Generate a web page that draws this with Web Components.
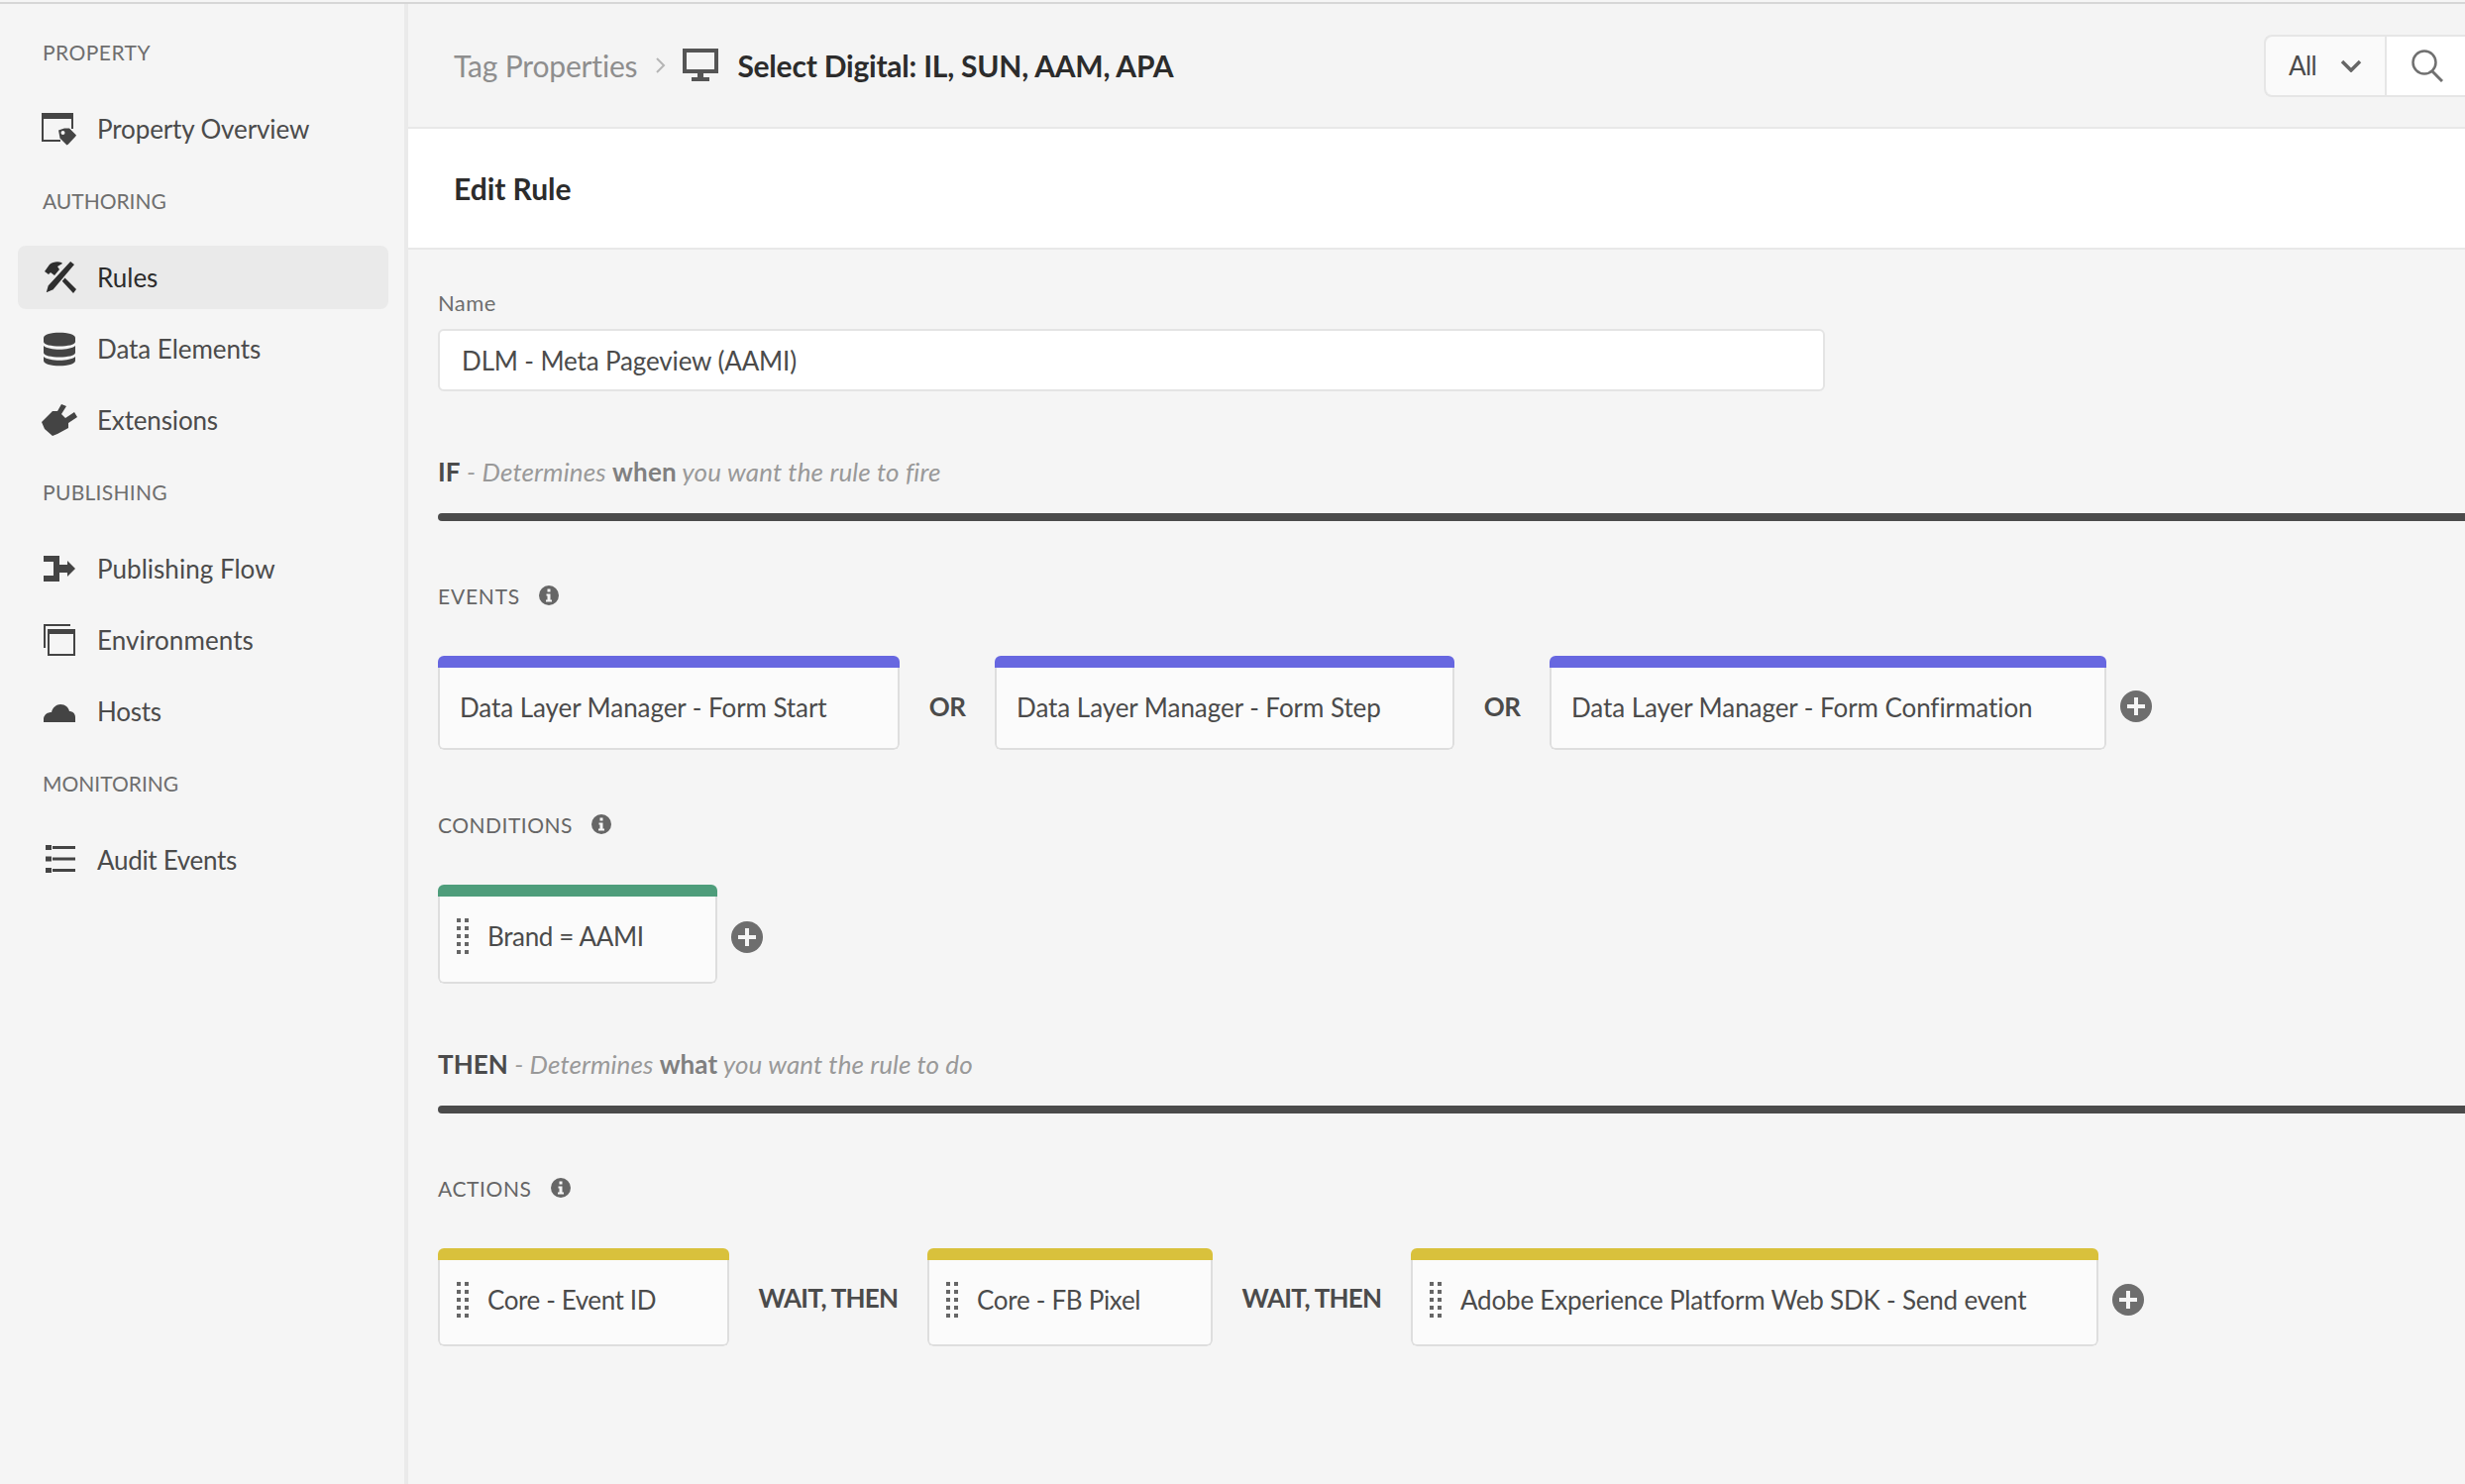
<!DOCTYPE html>
<html>
<head>
<meta charset="utf-8">
<title>Edit Rule</title>
<style>
html, body { margin: 0; height: 100%; background: #f5f5f5; overflow: hidden; }
body { font-family: Lato, "Open Sans", sans-serif; color: #4b4b4b; }
</style>
</head>
<body>
<app-shell>
  <side-nav slot="nav">
    <nav-group label="PROPERTY" ls="0.45">
      <nav-item ls="-0.12"><svg slot="icon" width="36" height="36" viewBox="0 0 36 36"><path fill="#444" d="M0 2h32v6H0z"/><path fill="none" stroke="#444" stroke-width="2" d="M1 7v23h18M31 7v11"/><path fill="#444" d="M17 19.500 23 17.500h5l7 7-1 1.500-7 7.500-1.500 1-7-7z"/><circle cx="21.500" cy="22" r="2" fill="#f5f5f5"/></svg>Property Overview</nav-item>
    </nav-group>
    <nav-group label="AUTHORING" ls="-0.03">
      <nav-item active ls="0"><svg slot="icon" width="36" height="36" viewBox="0 0 36 36"><path fill="#2f2f2f" d="M3 12 8 5c3-2.500 8-3.500 12-2l1 1-5 3 2 3-5 6-4-3-2 2z"/><path fill="#2f2f2f" d="m20 21 3-3 12 12-3 4z"/><path fill="#2f2f2f" stroke="#eaeaea" stroke-width="1.500" d="M29 1 34 5 12 31l-7 3-1-1 2-7z"/></svg>Rules</nav-item>
      <nav-item ls="-0.05"><svg slot="icon" width="36" height="36" viewBox="0 0 36 36"><path fill="#444" d="M2 7c0-7 32-7 32 0v4c0 6-32 6-32 0zM2 15c6 5 26 5 32 0v7c0 6-32 6-32 0zM2 26c6 5 26 5 32 0v4c0 7-32 7-32 0z"/></svg>Data Elements</nav-item>
      <nav-item ls="-0.15"><svg slot="icon" width="36" height="36" viewBox="0 0 36 36"><path fill="#444" d="M0 20 11 9h5l4-7 5 2-5 8 4 4 9-6 3 5-9 6v5l-11 6-5 2-8-7z"/></svg>Extensions</nav-item>
    </nav-group>
    <nav-group label="PUBLISHING" ls="0.3">
      <nav-item ls="0.03"><svg slot="icon" width="36" height="36" viewBox="0 0 36 36"><path fill="#444" d="M2 5h16v9h8v-4l8 8-8 8v-4h-8v9H2v-6h10V11H2z"/></svg>Publishing Flow</nav-item>
      <nav-item ls="0.1"><svg slot="icon" width="36" height="36" viewBox="0 0 36 36"><path fill="none" stroke="#444" stroke-width="2" d="M3 26V3h26M7 11v22h26V11"/><path fill="#444" d="M6 7h28v5H6z"/></svg>Environments</nav-item>
      <nav-item ls="-0.25"><svg slot="icon" width="36" height="36" viewBox="0 0 36 36"><path fill="#444" d="M2 29v-4c1-4 4-6 8-6 1-5 5-8 9-8 5 0 8 3 9 7 3 0 6 2 6 6v5z"/></svg>Hosts</nav-item>
    </nav-group>
    <nav-group label="MONITORING" ls="0">
      <nav-item ls="-0.3"><svg slot="icon" width="36" height="36" viewBox="0 0 36 36"><path fill="#444" d="M11 4h23v3H11zM11 15.500h23v3H11zM11 27h23v3H11z"/><path fill="#444" d="M4 3h6v5H4zM4 14.500h6v5H4zM4 26h6v5H4z"/></svg>Audit Events</nav-item>
    </nav-group>
  </side-nav>

  <top-bar slot="top"></top-bar>
  <page-title slot="title">Edit Rule</page-title>

  <rule-form slot="form">
    <text-field label="Name" value="DLM - Meta Pageview (AAMI)"></text-field>

    <rule-heading word="IF" when="when" tail="you want the rule to fire" ls="0.14"></rule-heading>
    <rule-group heading="EVENTS" ls="0.8">
      <rule-card color="#6767e0" width="466" ls="-0.07" lift="2">Data Layer Manager - Form Start</rule-card>
      <rule-link width="96" drop="7">OR</rule-link>
      <rule-card color="#6767e0" width="464" ls="-0.05" lift="2">Data Layer Manager - Form Step</rule-card>
      <rule-link width="96" drop="7">OR</rule-link>
      <rule-card color="#6767e0" width="562" ls="-0.07" lift="2">Data Layer Manager - Form Confirmation</rule-card>
      <add-button drop="7" gap="14"></add-button>
    </rule-group>
    <rule-group heading="CONDITIONS" ls="0.5" height="100">
      <rule-card color="#4e9d7b" width="282" grip="6" ls="-0.35">Brand = AAMI</rule-card>
      <add-button drop="6" gap="14"></add-button>
    </rule-group>

    <rule-heading word="THEN" when="what" tail="you want the rule to do" ls="0.09"></rule-heading>
    <rule-group heading="ACTIONS" ls="0.6" height="99">
      <rule-card color="#d9c13c" width="294" grip="5" ls="-0.4">Core - Event ID</rule-card>
      <rule-link width="200" drop="0">WAIT, THEN</rule-link>
      <rule-card color="#d9c13c" width="288" grip="5" ls="-0.3">Core - FB Pixel</rule-card>
      <rule-link width="200" drop="0">WAIT, THEN</rule-link>
      <rule-card color="#d9c13c" width="694" grip="5" ls="-0.2">Adobe Experience Platform Web SDK - Send event</rule-card>
      <add-button drop="5" gap="14"></add-button>
    </rule-group>
  </rule-form>
</app-shell>

<script>
class AppShell extends HTMLElement {
  constructor() {
    super();
    this.attachShadow({mode: "open"}).innerHTML = `
      <style>
      :host { display: block; height: 1498px; box-sizing: border-box; padding-top: 2px; overflow: hidden; }
      .frame { display: grid; grid-template-columns: 412px 1fr; height: 100%; border-top: 2px solid #d6d6d6; }
      nav { background: #f5f5f5; border-right: 4px solid #eaeaea; box-sizing: border-box; }
      main { min-width: 0; display: flex; flex-direction: column; }
      </style>
      <div class="frame">
        <nav><slot name="nav"></slot></nav>
        <main>
          <slot name="top"></slot>
          <slot name="title"></slot>
          <slot name="form"></slot>
        </main>
      </div>`;
  }
}

class SideNav extends HTMLElement {
  constructor() {
    super();
    this.attachShadow({mode: "open"}).innerHTML = `
      <style>
      :host { display: flex; flex-direction: column; gap: 19px; padding: 31px 16px 0 18px; }
      </style>
      <slot></slot>`;
  }
}

class NavGroup extends HTMLElement {
  constructor() {
    super();
    this.attachShadow({mode: "open"}).innerHTML = `
      <style>
      :host { display: block; }
      .label { height: 36px; line-height: 36px; margin: 0 0 23px 25px; font-size: 21px; color: #6e6e6e; }
      </style>
      <div class="label" style="letter-spacing:${this.getAttribute("ls")}px">${this.getAttribute("label")}</div>
      <slot></slot>`;
  }
}

class NavItem extends HTMLElement {
  constructor() {
    super();
    this.attachShadow({mode: "open"}).innerHTML = `
      <style>
      :host { display: block; height: 72px; padding: 4px 0; box-sizing: border-box; }
      .row { height: 64px; display: flex; align-items: center; gap: 20px; padding-left: 24px; border-radius: 8px; font-size: 26px; color: #4b4b4b; }
      :host([active]) .row { background: #eaeaea; color: #2c2c2c; }
      ::slotted(svg) { flex: none; display: block; }
      </style>
      <div class="row" style="letter-spacing:${this.getAttribute("ls")}px"><slot name="icon"></slot><span><slot></slot></span></div>`;
  }
}

class TopBar extends HTMLElement {
  constructor() {
    super();
    this.attachShadow({mode: "open"}).innerHTML = `
      <style>
      :host { display: flex; align-items: center; height: 126px; box-sizing: border-box; padding-left: 46px; border-bottom: 2px solid #e8e8e8; background: #f4f4f4; font-size: 30px; }
      .crumb { color: #8e8e8e; letter-spacing: -0.18px; }
      .sep { margin: 0 16px 0 18px; display: block; }
      .name { margin-left: 19px; font-weight: 700; color: #2c2c2c; letter-spacing: -0.22px; }
      .search { margin-left: auto; display: flex; height: 63px; box-sizing: border-box; width: 203px; border: 2px solid #e6e6e6; border-right: 0; border-radius: 8px 0 0 8px; }
      .scope { width: 122px; flex: none; display: flex; align-items: center; padding-left: 23px; box-sizing: border-box; gap: 24px; background: #fafafa; border-right: 2px solid #e6e6e6; border-radius: 8px 0 0 8px; font-size: 26px; color: #4b4b4b; letter-spacing: -0.6px; }
      .go { flex: 1; background: #fff; display: flex; align-items: center; padding-left: 25px; }
      svg { display: block; flex: none; }
      </style>
      <span class="crumb">Tag Properties</span>
      <svg class="sep" width="12" height="20" viewBox="0 0 12 20"><path d="M2 3l7 7-7 7" fill="none" stroke="#b5b5b5" stroke-width="2"/></svg>
      <svg width="36" height="34" viewBox="0 0 36 34"><path fill="#555" d="M0 0h36v25H21v4h6v4H9v-4h6v-4H0zm4 4v17h28V4z"/></svg>
      <span class="name">Select Digital: IL, SUN, AAM, APA</span>
      <div class="search">
        <div class="scope">All<svg width="22" height="13" viewBox="0 0 22 13"><path d="M2 2l9 9 9-9" fill="none" stroke="#666" stroke-width="3.500"/></svg></div>
        <div class="go"><svg width="32" height="33" viewBox="0 0 32 33"><circle cx="13" cy="13" r="11.500" fill="none" stroke="#707070" stroke-width="2.500"/><path d="M21 22l10 10" stroke="#707070" stroke-width="3"/></svg></div>
      </div>`;
  }
}

class PageTitle extends HTMLElement {
  constructor() {
    super();
    this.attachShadow({mode: "open"}).innerHTML = `
      <style>
      :host { display: flex; align-items: center; height: 122px; box-sizing: border-box; padding-left: 46px; background: #fff; border-bottom: 2px solid #e8e8e8; font-size: 30px; font-weight: 700; color: #2c2c2c; letter-spacing: -0.05px; }
      </style>
      <slot></slot>`;
  }
}

class RuleForm extends HTMLElement {
  constructor() {
    super();
    this.attachShadow({mode: "open"}).innerHTML = `
      <style>
      :host { display: block; padding-left: 30px; }
      </style>
      <slot></slot>`;
  }
}

class TextField extends HTMLElement {
  constructor() {
    super();
    this.attachShadow({mode: "open"}).innerHTML = `
      <style>
      :host { display: block; padding-top: 39px; }
      label { display: block; height: 30px; line-height: 30px; margin-bottom: 11px; font-size: 22px; color: #6e6e6e; letter-spacing: 0.4px; }
      .box { width: 1400px; height: 63px; box-sizing: border-box; display: flex; align-items: center; padding-left: 22px; background: #fff; border: 2px solid #e4e4e4; border-radius: 6px; font-size: 26px; color: #4b4b4b; letter-spacing: -0.14px; }
      </style>
      <label>${this.getAttribute("label")}</label>
      <div class="box">${this.getAttribute("value")}</div>`;
  }
}

class RuleHeading extends HTMLElement {
  constructor() {
    super();
    this.attachShadow({mode: "open"}).innerHTML = `
      <style>
      :host { display: block; padding-top: 62px; }
      .text { height: 40px; line-height: 38px; font-size: 26px; color: #999; font-style: italic; }
      b { font-style: normal; color: #4b4b4b; }
      b.when { color: #808080; }
      .rule { height: 8px; margin-top: 21px; background: #4b4b4b; border-radius: 4px 0 0 4px; }
      </style>
      <div class="text" style="letter-spacing:${this.getAttribute("ls")}px"><b>${this.getAttribute("word")}</b> - Determines <b class="when">${this.getAttribute("when")}</b> ${this.getAttribute("tail")}</div>
      <div class="rule"></div>`;
  }
}

class RuleGroup extends HTMLElement {
  constructor() {
    super();
    this.attachShadow({mode: "open"}).innerHTML = `
      <style>
      :host { display: block; padding-top: 61px; }
      .head { display: flex; align-items: center; gap: 19px; height: 30px; box-sizing: border-box; padding-bottom: 2px; margin-bottom: 45px; font-size: 21px; color: #666; }
      .row { display: flex; align-items: stretch; height: ${this.getAttribute("height") || 95}px; }
      svg { display: block; }
      </style>
      <div class="head"><span style="letter-spacing:${this.getAttribute("ls")}px">${this.getAttribute("heading")}</span>
        <svg width="20" height="20" viewBox="0 0 20 20"><circle cx="10" cy="10" r="10" fill="#666"/><path fill="#f5f5f5" d="M8.500 3.500h3v3h-3zM7.500 8.500h4v6h1.500v2H7v-2h1.500v-4h-1z"/></svg>
      </div>
      <div class="row"><slot></slot></div>`;
  }
}

class RuleCard extends HTMLElement {
  constructor() {
    super();
    const grip = this.getAttribute("grip");
    const lift = grip || this.getAttribute("lift") || 0;
    const dots = [0, 8, 16, 24, 32].map(y => `<rect x="0" y="${y}" width="4" height="4"/><rect x="8" y="${y}" width="4" height="4"/>`).join("");
    this.attachShadow({mode: "open"}).innerHTML = `
      <style>
      :host { display: flex; flex-direction: column; flex: none; width: ${this.getAttribute("width")}px; box-sizing: border-box; border-radius: 6px; overflow: hidden; background: #fbfbfb; font-size: 26px; color: #4b4b4b; letter-spacing: ${this.getAttribute("ls")}px; }
      .bar { height: 12px; flex: none; background: ${this.getAttribute("color")}; }
      .body { flex: 1; display: flex; align-items: center; box-sizing: border-box; padding: 0 0 ${lift}px ${grip ? 17 : 20}px; gap: 19px; border: 2px solid #dedede; border-top: 0; border-radius: 0 0 6px 6px; }
      svg { display: block; flex: none; }
      </style>
      <div class="bar"></div>
      <div class="body">${grip ? `<svg width="12" height="36" viewBox="0 0 12 36" fill="#666">${dots}</svg>` : ""}<span><slot></slot></span></div>`;
  }
}

class RuleLink extends HTMLElement {
  constructor() {
    super();
    this.attachShadow({mode: "open"}).innerHTML = `
      <style>
      :host { display: flex; align-items: center; justify-content: center; flex: none; width: ${this.getAttribute("width")}px; padding-top: ${this.getAttribute("drop")}px; box-sizing: border-box; font-size: 26px; font-weight: 700; color: #4b4b4b; letter-spacing: -0.7px; }
      </style>
      <slot></slot>`;
  }
}

class AddButton extends HTMLElement {
  constructor() {
    super();
    this.attachShadow({mode: "open"}).innerHTML = `
      <style>
      :host { display: flex; align-items: center; padding: ${this.getAttribute("drop")}px 0 0 ${this.getAttribute("gap")}px; }
      svg { display: block; }
      </style>
      <svg width="32" height="32" viewBox="0 0 32 32"><circle cx="16" cy="16" r="16" fill="#6e6e6e"/><path fill="#f5f5f5" d="M14 7h4v7h7v4h-7v7h-4v-7H7v-4h7z"/></svg>`;
  }
}

customElements.define("app-shell", AppShell);
customElements.define("side-nav", SideNav);
customElements.define("nav-group", NavGroup);
customElements.define("nav-item", NavItem);
customElements.define("top-bar", TopBar);
customElements.define("page-title", PageTitle);
customElements.define("rule-form", RuleForm);
customElements.define("text-field", TextField);
customElements.define("rule-heading", RuleHeading);
customElements.define("rule-group", RuleGroup);
customElements.define("rule-card", RuleCard);
customElements.define("rule-link", RuleLink);
customElements.define("add-button", AddButton);
</script>
</body>
</html>
